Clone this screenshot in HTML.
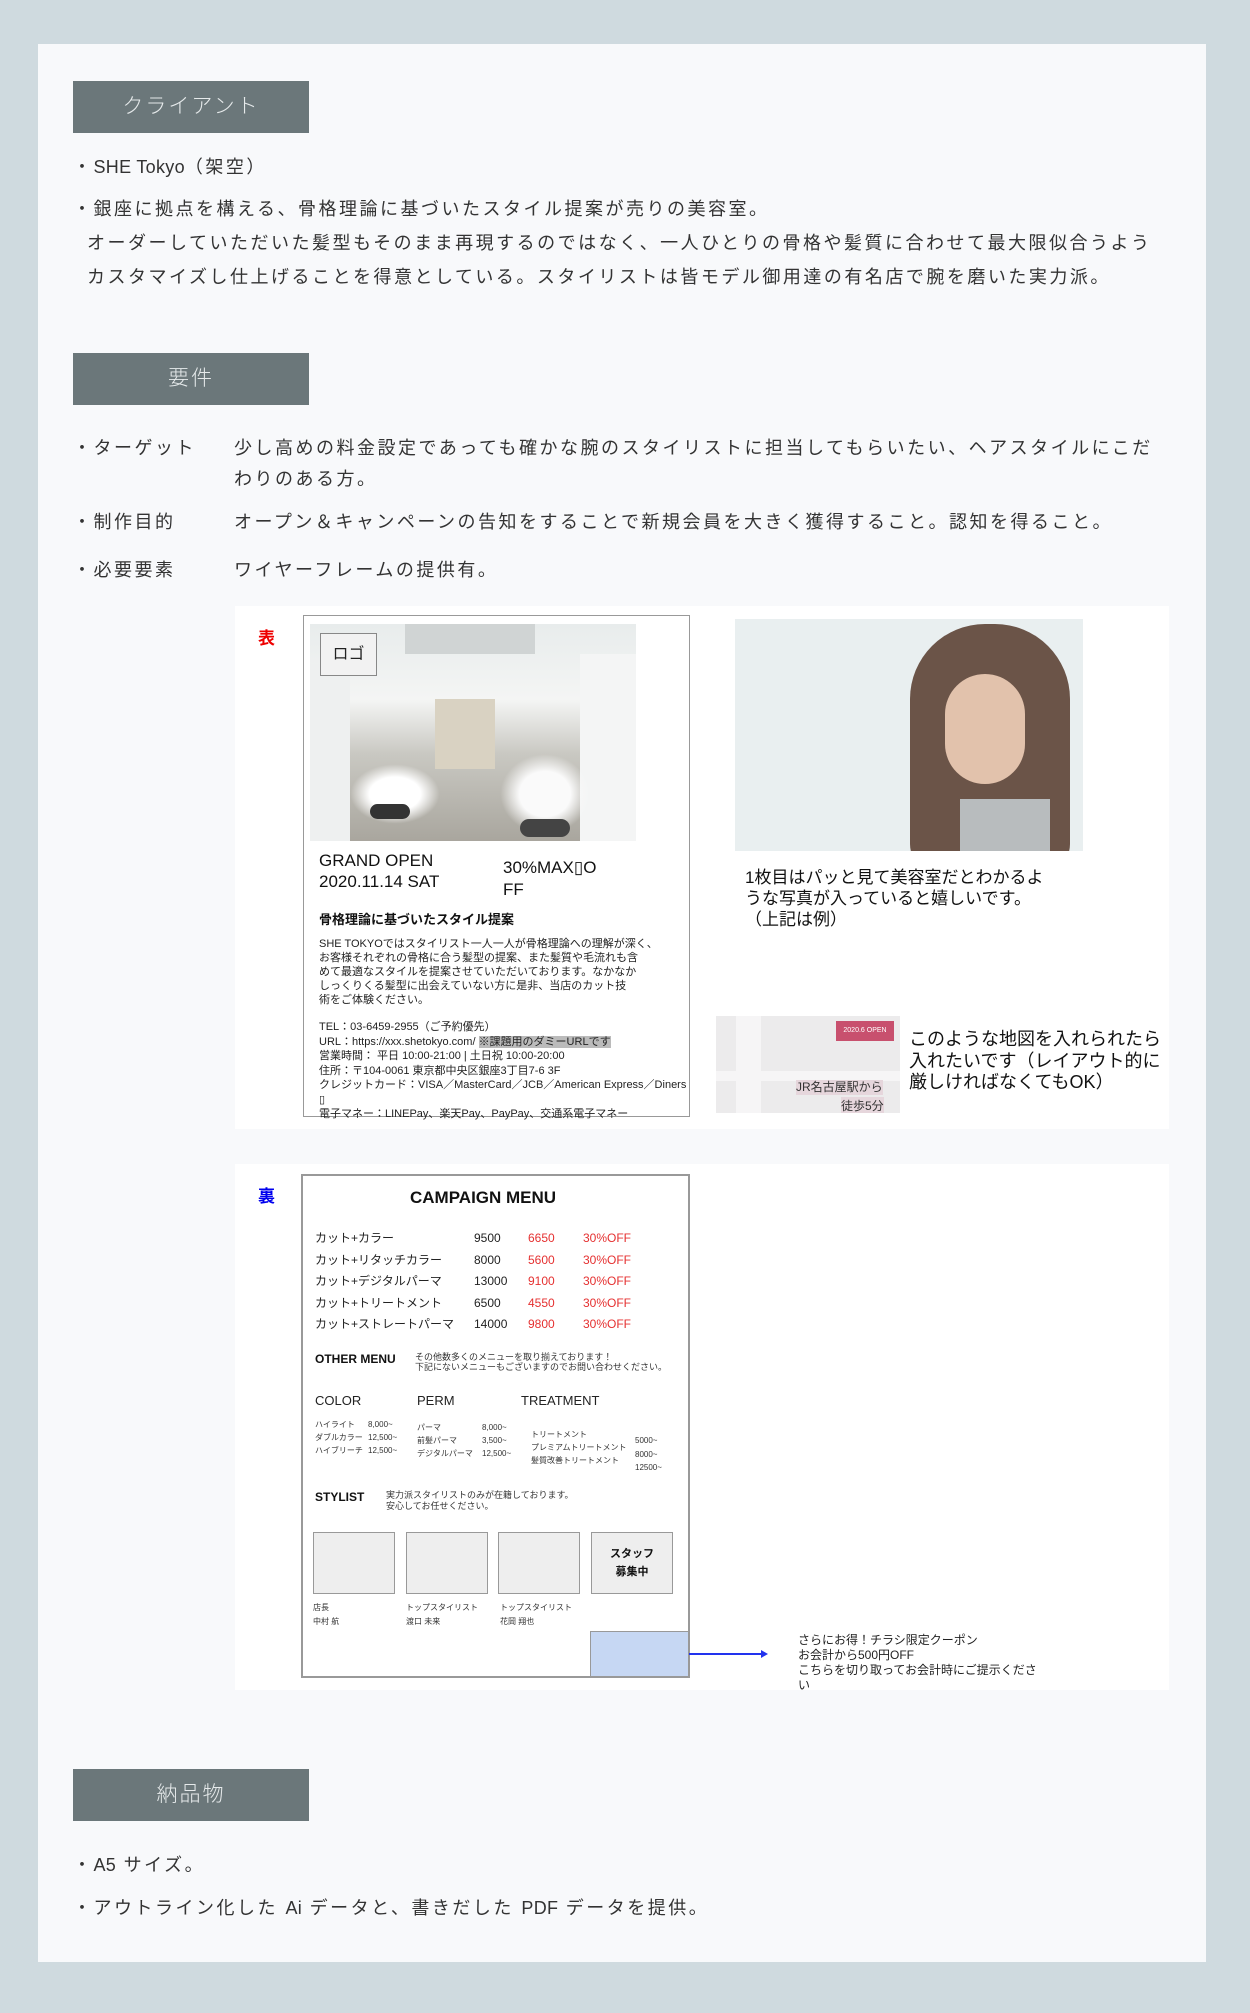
<!DOCTYPE html>
<html><head><meta charset="utf-8"><style>
*{margin:0;padding:0;box-sizing:border-box}
body{width:1250px;height:2013px;background:#cfdadf;position:relative;font-family:"Liberation Sans","Noto Sans CJK JP",sans-serif;color:#333;overflow:hidden}
.card{position:absolute;left:38px;top:44px;width:1168px;height:1918px;background:#f8f9fb}
.a{position:absolute;white-space:nowrap}
.lbl{position:absolute;left:73px;width:236px;height:52px;background:#6b777a;color:#e6eaeb;font-size:21px;line-height:52px;text-align:center;letter-spacing:2px;font-weight:300}
.t{position:absolute;font-size:18px;line-height:24px;color:#333;white-space:nowrap;letter-spacing:2.5px}
.l{letter-spacing:0.3px}
.panel{position:absolute;left:235px;width:934px;background:#fff}
.fly{position:absolute;border:1px solid #999;background:#fff}
.s{font-size:11px;line-height:14px;color:#222}
.r{color:#e53030}
.box{position:absolute;width:82px;height:62px;background:#eee;border:1px solid #999}
</style></head><body>
<div class="card"></div>
<div class="lbl" style="top:81px">クライアント</div>
<div class="t" style="left:73px;top:155px">・<span class="l">SHE Tokyo</span>（架空）</div>
<div class="t" style="left:73px;top:197px">・銀座に拠点を構える、骨格理論に基づいたスタイル提案が売りの美容室。</div>
<div class="t" style="left:87px;top:231px">オーダーしていただいた髪型もそのまま再現するのではなく、一人ひとりの骨格や髪質に合わせて最大限似合うよう</div>
<div class="t" style="left:87px;top:265px">カスタマイズし仕上げることを得意としている。スタイリストは皆モデル御用達の有名店で腕を磨いた実力派。</div>
<div class="lbl" style="top:353px">要件</div>
<div class="t" style="left:73px;top:436px">・ターゲット</div>
<div class="t" style="left:234px;top:436px">少し高めの料金設定であっても確かな腕のスタイリストに担当してもらいたい、ヘアスタイルにこだ</div>
<div class="t" style="left:234px;top:467px">わりのある方。</div>
<div class="t" style="left:73px;top:510px">・制作目的</div>
<div class="t" style="left:234px;top:510px">オープン＆キャンペーンの告知をすることで新規会員を大きく獲得すること。認知を得ること。</div>
<div class="t" style="left:73px;top:558px">・必要要素</div>
<div class="t" style="left:234px;top:558px">ワイヤーフレームの提供有。</div>

<div class="panel" style="top:606px;height:523px"></div>
<div class="a" style="left:258px;top:624px;color:#e00;font-weight:bold;font-size:17px">表</div>
<div class="fly" style="left:303px;top:615px;width:387px;height:502px"></div>
<div class="a" style="left:310px;top:624px;width:326px;height:217px;overflow:hidden;background:linear-gradient(180deg,#e8ecec 0%,#f4f5f4 35%,#c9c8c2 60%,#a9a69e 100%)">
 <div class="a" style="left:95px;top:0;width:130px;height:30px;background:#d0d4d4"></div>
 <div class="a" style="left:125px;top:75px;width:60px;height:70px;background:#d9d2c2"></div>
 <div class="a" style="left:0;top:40px;width:40px;height:177px;background:#eef0f0"></div>
 <div class="a" style="left:270px;top:30px;width:56px;height:187px;background:#f4f5f5"></div>
 <div class="a" style="left:40px;top:140px;width:90px;height:60px;background:radial-gradient(ellipse,#fff 40%,transparent 70%)"></div>
 <div class="a" style="left:190px;top:130px;width:90px;height:80px;background:radial-gradient(ellipse,#fafafa 40%,transparent 70%)"></div>
 <div class="a" style="left:60px;top:180px;width:40px;height:15px;background:#333;border-radius:8px"></div>
 <div class="a" style="left:210px;top:195px;width:50px;height:18px;background:#444;border-radius:9px"></div>
</div>
<div class="a" style="left:320px;top:633px;width:57px;height:43px;background:#f2f2f2;border:1px solid #888;font-size:16px;line-height:41px;text-align:center;color:#222">ロゴ</div>
<div class="a" style="left:319px;top:850px;font-size:17px;line-height:21px;color:#111">GRAND OPEN<br>2020.11.14 SAT</div>
<div class="a" style="left:503px;top:857px;font-size:17px;line-height:22px;color:#111">30%MAX▯O<br>FF</div>
<div class="a" style="left:319px;top:909px;font-size:13px;font-weight:bold;color:#111">骨格理論に基づいたスタイル提案</div>
<div class="a s" style="left:319px;top:937px">SHE TOKYOではスタイリスト一人一人が骨格理論への理解が深く、<br>お客様それぞれの骨格に合う髪型の提案、また髪質や毛流れも含<br>めて最適なスタイルを提案させていただいております。なかなか<br>しっくりくる髪型に出会えていない方に是非、当店のカット技<br>術をご体験ください。</div>
<div class="a s" style="left:319px;top:1020px;line-height:14.5px">TEL：03-6459-2955（ご予約優先）<br>URL：https://xxx.shetokyo.com/ <span style="background:#bbb">※課題用のダミーURLです</span><br>営業時間： 平日 10:00-21:00 | 土日祝 10:00-20:00<br>住所：〒104-0061 東京都中央区銀座3丁目7-6 3F<br>クレジットカード：VISA／MasterCard／JCB／American Express／Diners<br>▯<br>電子マネー：LINEPay、楽天Pay、PayPay、交通系電子マネー</div>
<div class="a" style="left:735px;top:619px;width:348px;height:232px;background:#e9eff0;overflow:hidden">
 <div class="a" style="left:175px;top:5px;width:160px;height:250px;border-radius:75px 75px 30px 30px;background:#6b5448"></div>
 <div class="a" style="left:210px;top:55px;width:80px;height:110px;border-radius:40px;background:#e2c2ac"></div>
 <div class="a" style="left:225px;top:180px;width:90px;height:60px;background:#b8bcbe"></div>
</div>
<div class="a" style="left:745px;top:867px;font-size:17px;line-height:21px;color:#111">1枚目はパッと見て美容室だとわかるよ<br>うな写真が入っていると嬉しいです。<br>（上記は例）</div>
<div class="a" style="left:716px;top:1016px;width:184px;height:97px;background:#ecebec;overflow:hidden">
 <div class="a" style="left:20px;top:0;width:25px;height:97px;background:#f6f5f6"></div>
 <div class="a" style="left:0;top:55px;width:184px;height:10px;background:#f6f5f6"></div>
 <div class="a" style="left:120px;top:5px;width:58px;height:20px;background:#c8506e;color:#fff;font-size:7px;line-height:20px;text-align:center">2020.6 OPEN</div>
 <div class="a" style="left:80px;top:64px;font-size:12px;line-height:15px;color:#333;background:#e6d6dc">JR名古屋駅から</div>
 <div class="a" style="left:125px;top:81px;font-size:12px;color:#333;background:#e6d6dc">徒歩5分</div>
</div>
<div class="a" style="left:909px;top:1029px;font-size:18px;line-height:21.5px;color:#111">このような地図を入れられたら<br>入れたいです（レイアウト的に<br>厳しければなくてもOK）</div>

<div class="panel" style="top:1164px;height:526px"></div>
<div class="a" style="left:258px;top:1182px;color:#00e;font-weight:bold;font-size:17px">裏</div>
<div class="fly" style="left:301px;top:1174px;width:389px;height:504px;border-width:2px"></div>
<div class="a" style="left:410px;top:1188px;font-size:17px;font-weight:bold;color:#111">CAMPAIGN MENU</div>
<div class="a" style="left:315px;top:1228px;font-size:12px;line-height:21.5px;color:#222">カット+カラー<br>カット+リタッチカラー<br>カット+デジタルパーマ<br>カット+トリートメント<br>カット+ストレートパーマ</div>
<div class="a" style="left:474px;top:1228px;font-size:12px;line-height:21.5px;color:#222">9500<br>8000<br>13000<br>6500<br>14000</div>
<div class="a r" style="left:528px;top:1228px;font-size:12px;line-height:21.5px">6650<br>5600<br>9100<br>4550<br>9800</div>
<div class="a r" style="left:583px;top:1228px;font-size:12px;line-height:21.5px">30%OFF<br>30%OFF<br>30%OFF<br>30%OFF<br>30%OFF</div>
<div class="a" style="left:315px;top:1352px;font-size:12px;font-weight:bold;color:#111">OTHER MENU</div>
<div class="a" style="left:415px;top:1352px;font-size:9px;line-height:10px;color:#333">その他数多くのメニューを取り揃えております！<br>下記にないメニューもございますのでお問い合わせください。</div>
<div class="a" style="left:315px;top:1393px;font-size:13px;color:#222">COLOR</div>
<div class="a" style="left:417px;top:1393px;font-size:13px;color:#222">PERM</div>
<div class="a" style="left:521px;top:1393px;font-size:13px;color:#222">TREATMENT</div>
<div class="a" style="left:315px;top:1418px;font-size:8px;line-height:13px;color:#333">ハイライト<br>ダブルカラー<br>ハイブリーチ</div>
<div class="a" style="left:368px;top:1418px;font-size:8px;line-height:13px;color:#333">8,000~<br>12,500~<br>12,500~</div>
<div class="a" style="left:417px;top:1421px;font-size:8px;line-height:13px;color:#333">パーマ<br>前髪パーマ<br>デジタルパーマ</div>
<div class="a" style="left:482px;top:1421px;font-size:8px;line-height:13px;color:#333">8,000~<br>3,500~<br>12,500~</div>
<div class="a" style="left:531px;top:1428px;font-size:8px;line-height:13px;color:#333">トリートメント<br>プレミアムトリートメント<br>髪質改善トリートメント</div>
<div class="a" style="left:635px;top:1434px;font-size:8px;line-height:13.5px;color:#333">5000~<br>8000~<br>12500~</div>
<div class="a" style="left:315px;top:1490px;font-size:12px;font-weight:bold;color:#111">STYLIST</div>
<div class="a" style="left:386px;top:1490px;font-size:9px;line-height:10.5px;color:#333">実力派スタイリストのみが在籍しております。<br>安心してお任せください。</div>
<div class="box" style="left:313px;top:1532px"></div>
<div class="box" style="left:406px;top:1532px"></div>
<div class="box" style="left:498px;top:1532px"></div>
<div class="box" style="left:591px;top:1532px;font-size:11px;font-weight:bold;text-align:center;line-height:18px;padding-top:12px;color:#111">スタッフ<br>募集中</div>
<div class="a" style="left:313px;top:1601px;font-size:8px;line-height:14px;color:#333">店長<br>中村 航</div>
<div class="a" style="left:406px;top:1601px;font-size:8px;line-height:14px;color:#333">トップスタイリスト<br>渡口 未来</div>
<div class="a" style="left:500px;top:1601px;font-size:8px;line-height:14px;color:#333">トップスタイリスト<br>花岡 翔也</div>
<div class="a" style="left:590px;top:1631px;width:99px;height:46px;background:#c6d7f3;border:1px solid #999"></div>
<div class="a" style="left:689px;top:1653px;width:74px;height:2px;background:#2233ee"></div>
<div class="a" style="left:761px;top:1650px;width:0;height:0;border-left:7px solid #2233ee;border-top:4px solid transparent;border-bottom:4px solid transparent"></div>
<div class="a" style="left:798px;top:1633px;font-size:12px;line-height:15px;color:#222">さらにお得！チラシ限定クーポン<br>お会計から500円OFF<br>こちらを切り取ってお会計時にご提示くださ<br>い</div>

<div class="lbl" style="top:1769px">納品物</div>
<div class="t" style="left:73px;top:1853px">・<span class="l">A5</span> サイズ。</div>
<div class="t" style="left:73px;top:1896px">・アウトライン化した <span class="l">Ai</span> データと、書きだした <span class="l">PDF</span> データを提供。</div>
</body></html>
